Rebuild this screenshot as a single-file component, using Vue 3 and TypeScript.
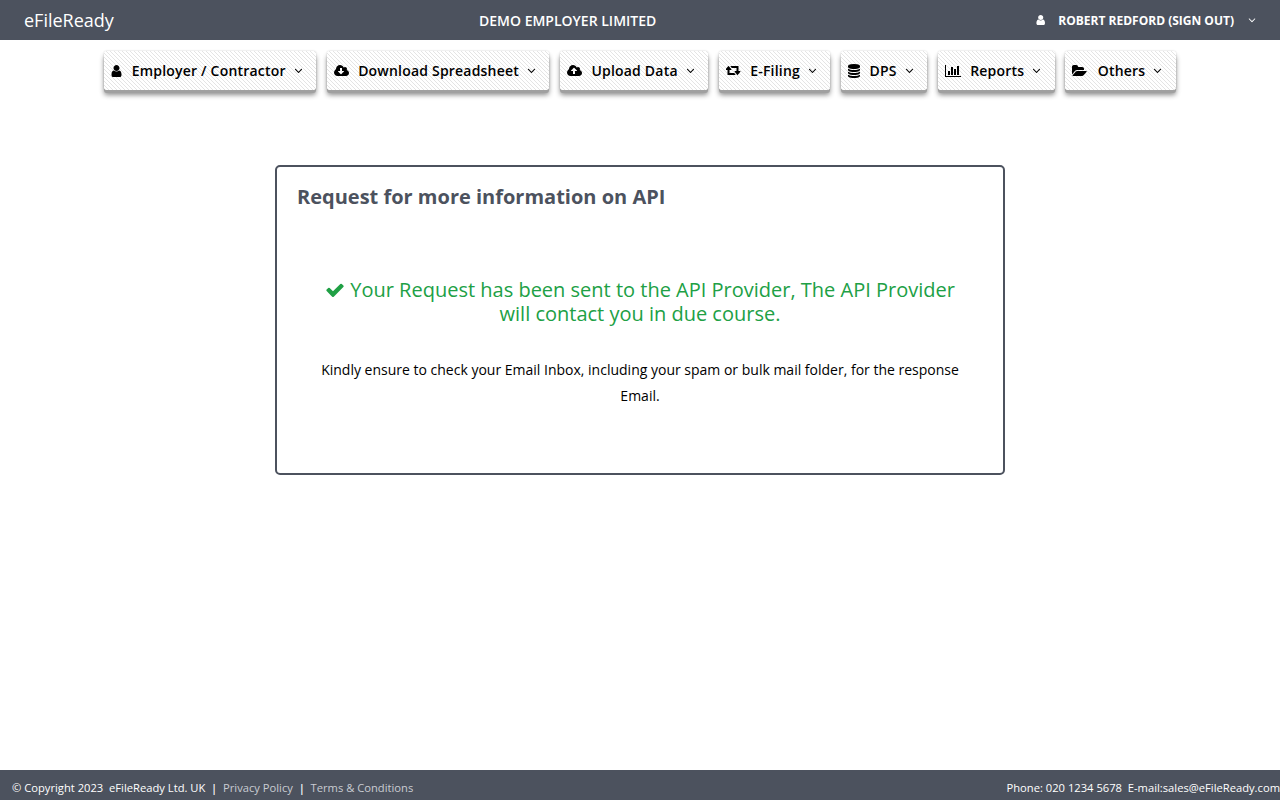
<script setup lang="ts">
interface MenuItem {
  label: string
  vb: string
  d: string
  w: number
}
const menu: MenuItem[] = [
  { label: 'Employer / Contractor', vb: '192 0 1408 1792', w: 11, d: 'M1536 1399q0 109-62.500 187t-150.500 78h-854q-88 0-150.500-78t-62.500-187q0-85 8.500-160.500t31.500-152 58.500-131 94-89 134.500-34.500q131 128 313 128t313-128q76 0 134.500 34.500t94 89 58.500 131 31.500 152 8.500 160.500zm-256-887q0 159-112.500 271.500t-271.500 112.500-271.500-112.500-112.500-271.500 112.500-271.500 271.500-112.500 271.500 112.500 112.500 271.500z' },
  { label: 'Download Spreadsheet', vb: '0 0 1920 1792', w: 15, d: 'M1280 928q0-14-9-23t-23-9h-224v-352q0-13-9.500-22.500t-22.500-9.500h-192q-13 0-22.500 9.500t-9.500 22.500v352h-224q-13 0-22.500 9.500t-9.500 22.500q0 14 9 23l352 352q9 9 23 9t23-9l351-351q10-12 10-24zm640 224q0 159-112.500 271.500t-271.500 112.500h-1088q-185 0-316.500-131.500t-131.500-316.500q0-130 70-240t188-165q-2-30-2-43 0-212 150-362t362-150q156 0 285.500 87t188.500 231q71-62 166-62 106 0 181 75t75 181q0 76-41 138 130 31 213.500 135.500t83.500 238.500z' },
  { label: 'Upload Data', vb: '0 0 1920 1792', w: 15, d: 'M1280 864q0-14-9-23l-352-352q-9-9-23-9t-23 9l-351 351q-10 12-10 24 0 14 9 23t23 9h224v352q0 13 9.500 22.500t22.500 9.500h192q13 0 22.500-9.500t9.500-22.500v-352h224q13 0 22.500-9.500t9.500-22.500zm640 288q0 159-112.500 271.500t-271.500 112.500h-1088q-185 0-316.500-131.500t-131.500-316.500q0-130 70-240t188-165q-2-30-2-43 0-212 150-362t362-150q156 0 285.500 87t188.500 231q71-62 166-62 106 0 181 75t75 181q0 76-41 138 130 31 213.500 135.500t83.500 238.500z' },
  { label: 'E-Filing', vb: '0 0 1920 1792', w: 15, d: 'M1216 1376q0 13-9.500 22.500t-22.500 9.500h-960q-8 0-13.500-2t-9-7-5.500-8-3-11.500-1-11.500v-600h-192q-26 0-45-19t-19-45q0-24 15-41l320-384q19-22 49-22t49 22l320 384q15 17 15 41 0 26-19 45t-45 19h-192v384h576q16 0 25 11l160 192q7 10 7 21zm640-416q0 24-15 41l-320 384q-20 23-49 23t-49-23l-320-384q-15-17-15-41 0-26 19-45t45-19h192v-384h-576q-16 0-25-12l-160-192q-7-9-7-20 0-13 9.500-22.500t22.500-9.500h960q8 0 13.500 2t9 7 5.500 8 3 11.500 1 11.500v600h192q26 0 45 19t19 45z' },
  { label: 'DPS', vb: '128 0 1536 1792', w: 12, d: 'M896 768q237 0 443-43t325-127v170q0 69-103 128t-280 93.500-385 34.500-385-34.500-280-93.500-103-128v-170q119 84 325 127t443 43zm0 768q237 0 443-43t325-127v170q0 69-103 128t-280 93.500-385 34.500-385-34.500-280-93.500-103-128v-170q119 84 325 127t443 43zm0-384q237 0 443-43t325-127v170q0 69-103 128t-280 93.500-385 34.500-385-34.500-280-93.500-103-128v-170q119 84 325 127t443 43zm0-1152q208 0 385 34.500t280 93.500 103 128v128q0 69-103 128t-280 93.500-385 34.500-385-34.500-280-93.500-103-128v-128q0-69 103-128t280-93.500 385-34.500z' },
  { label: 'Reports', vb: '0 0 2048 1792', w: 16, d: 'M640 896v512h-256v-512h256zm384-512v1024h-256v-1024h256zm1024 1152v128h-2048v-1536h128v1408h1920zm-640-896v768h-256v-768h256zm384-384v1152h-256v-1152h256z' },
  { label: 'Others', vb: '0 0 2048 1792', w: 16, d: 'M1879 952q0 31-31 66l-336 396q-43 51-120.500 86.500t-143.500 35.500h-1088q-34 0-60.500-13t-26.500-43q0-31 31-66l336-396q43-51 120.500-86.500t143.500-35.500h1088q34 0 60.500 13t26.500 43zm-343-344v160h-832q-94 0-197 47.500t-164 119.500l-337 396-5 6q0-4-.5-12.500t-.5-12.500v-960q0-92 66-158t158-66h320q92 0 158 66t66 158v32h544q92 0 158 66t66 158z' },
]
const angle = 'M1395 736q0 13-10 23l-466 466q-10 10-23 10t-23-10l-466-466q-10-10-10-23t10-23l50-50q10-10 23-10t23 10l393 393 393-393q10-10 23-10t23 10l50 50q10 10 10 23z'
const userIcon = menu[0]
const check = 'M1671 566q0 40-28 68l-724 724-136 136q-28 28-68 28t-68-28l-136-136-362-362q-28-28-28-68t28-68l136-136q28-28 68-28t68 28l294 295 656-657q28-28 68-28t68 28l136 136q28 28 28 68z'
</script>

<template>
  <div class="page">
    <header class="topbar">
      <span class="brand">eFileReady</span>
      <span class="employer">DEMO EMPLOYER LIMITED</span>
      <div class="user">
        <svg class="user-icon" :viewBox="userIcon.vb"><path :d="userIcon.d" /></svg>
        <span class="user-name">ROBERT REDFORD (SIGN OUT)</span>
        <svg class="user-caret" viewBox="0 0 1792 1792"><path :d="angle" /></svg>
      </div>
    </header>

    <nav class="menu">
      <button v-for="item in menu" :key="item.label" class="menu-btn" type="button">
        <svg class="menu-icon" :style="{ width: item.w + 'px' }" :viewBox="item.vb"><path :d="item.d" /></svg>
        <span class="menu-label">{{ item.label }}</span>
        <svg class="caret" viewBox="0 0 1792 1792"><path :d="angle" /></svg>
      </button>
    </nav>

    <main class="main">
      <section class="card">
        <h2 class="title">Request for more information on API</h2>
        <h3 class="success">
          <svg class="check" viewBox="0 0 1792 1792"><path :d="check" /></svg>
          Your Request has been sent to the API Provider, The API Provider will contact you in due course.
        </h3>
        <p class="note">Kindly ensure to check your Email Inbox, including your spam or bulk mail folder, for the response Email.</p>
      </section>
    </main>

    <footer class="footer">
      <div class="foot-left">
        <span>© Copyright 2023&nbsp; eFileReady Ltd. UK</span>
        <span class="sep">|</span>
        <a class="link">Privacy Policy</a>
        <span class="sep">|</span>
        <a class="link">Terms &amp; Conditions</a>
      </div>
      <div class="foot-right">Phone: 020 1234 5678&nbsp; E-mail:sales@eFileReady.com</div>
    </footer>
  </div>
</template>

<style>
html, body { margin: 0; background: #fff; }
</style>

<style scoped>
.page {
  height: 800px;
  display: flex;
  flex-direction: column;
  font-family: "Open Sans", sans-serif;
  color: #000;
  overflow: hidden;
}
svg { display: block; }
.topbar {
  height: 40px;
  flex: none;
  background: #4c525e;
  color: #fff;
  display: flex;
  align-items: center;
  padding: 0 22px 0 24px;
}
.brand { font-size: 18px; width: 455px; }
.employer { font-size: 14px; font-weight: 600; }
.user { margin-left: auto; display: flex; align-items: center; }
.user-icon { width: 9.4px; height: 12px; fill: #fff; margin-right: 13px; }
.user-name { font-size: 12px; font-weight: 700; }
.user-caret { width: 12px; height: 12px; fill: #fff; margin-left: 12px; }
.menu {
  flex: none;
  display: flex;
  justify-content: center;
  gap: 10.5px;
  padding-top: 11px;
}
.menu-btn {
  height: 39px;
  border: 0;
  border-radius: 3px;
  padding: 0 11.5px 0 7px;
  display: flex;
  align-items: center;
  font-family: inherit;
  font-size: 14px;
  font-weight: 600;
  letter-spacing: 0.2px;
  color: #000;
  background: repeating-linear-gradient(45deg, #e4e4e4 0 1px, #fff 1px 2.83px);
  box-shadow: 0 3px 0 #a0a0a0, 0 5px 5px rgba(0, 0, 0, 0.45), 0 0 2px rgba(0, 0, 0, 0.2);
}
.menu-icon { height: 14px; fill: #000; margin-right: 9.5px; flex: none; }
.caret { width: 13px; height: 13px; fill: #000; margin-left: 6px; }
.main { flex: 1; display: flex; justify-content: center; padding-top: 75px; }
.card {
  width: 730px;
  height: 310px;
  box-sizing: border-box;
  border: 2px solid #4c525e;
  border-radius: 5px;
  padding: 0 20px;
}
.title { margin: 16px 0 0; font-size: 20px; font-weight: 700; line-height: 27px; color: #4c525e; }
.success {
  margin: 68px 20px 0;
  font-size: 20px;
  font-weight: 400;
  line-height: 24px;
  color: #20a045;
  text-align: center;
}
.check { display: inline-block; width: 20px; height: 20px; fill: currentColor; vertical-align: -3px; }
.note { margin: 31px 20px 0; font-size: 14px; line-height: 26px; text-align: center; }
.footer {
  height: 30px;
  flex: none;
  background: #4c525e;
  color: #fff;
  font-size: 11.2px;
  display: flex;
  justify-content: space-between;
  align-items: center;
  padding: 5px 0 0 12px;
  box-sizing: border-box;
}
.foot-left { display: flex; align-items: center; }
.sep { margin: 0 5.75px; font-weight: 600; }
.link { color: #c9ccd2; }
</style>
